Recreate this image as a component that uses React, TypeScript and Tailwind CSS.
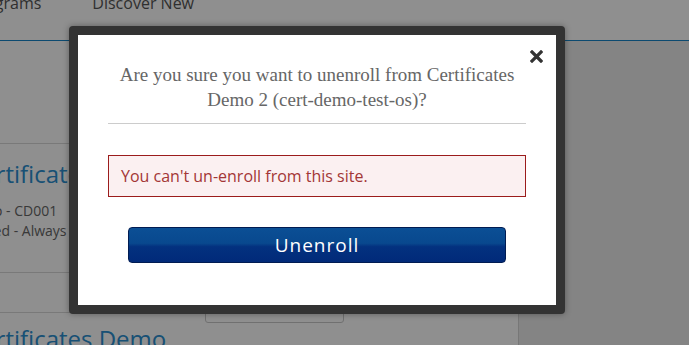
export default function App() {
  return (
    <div className="relative w-[689px] h-[345px] overflow-hidden bg-[#ececec] font-['Open_Sans',sans-serif]">
      {/* Page behind the dialog */}
      <header className="h-[50px] bg-white border-b border-[#1784c8] flex items-start gap-[51px] -ml-[31px] -mt-[9px] text-[16px] text-[#555]">
        <span>Programs</span>
        <span>Discover New</span>
      </header>

      <div className="flex">
        <div className="w-[519px] h-[304px] bg-white border-r border-[#d4d4d4] pt-[102px]">
          {/* Course item */}
          <div className="border-t border-[#d8d8d8] h-[129px] pt-[14px]">
            <h2 className="-ml-[33px] text-[24px] leading-[32px] text-[#2b8fd0] whitespace-nowrap">Certificates Demo 2</h2>
            <p className="-ml-[37px] mt-[11px] text-[14px] leading-[20px] text-[#666] whitespace-nowrap">Demo - CD001</p>
            <p className="-ml-[44px] text-[14px] leading-[20px] text-[#666] whitespace-nowrap">Enrolled - Always</p>
          </div>
          <div className="border-t border-[#d8d8d8] h-[40px]" />
          <div className="border-t border-[#d8d8d8] pt-[10px]">
            <h2 className="-ml-[33px] text-[24px] leading-[32px] text-[#2b8fd0] whitespace-nowrap">Certificates Demo</h2>
          </div>
        </div>
        <div className="flex-1" />
      </div>

      {/* Dropdown that sits below the modal */}
      <div className="absolute left-[205px] top-[250px] w-[139px] h-[73px] bg-white border border-[#c8c8c8] rounded-b-[3px]" />

      {/* Overlay */}
      <div className="absolute inset-0 bg-black/[0.44]" />

      {/* Modal */}
      <div className="absolute left-[69px] top-[26px] w-[496px] h-[288px] bg-[#333] rounded-[4px] p-[9px] shadow-[0_0_6px_rgba(0,0,0,0.35)]">
        <div className="relative h-full bg-white flex flex-col items-center px-[30px]">
          <button className="absolute top-[15px] right-[13px] w-[13px] h-[13px] flex items-center justify-center">
            <svg width="13" height="13" viewBox="0 0 13 13">
              <path d="M2 2 L11 11 M11 2 L2 11" stroke="#333" strokeWidth="3.2" strokeLinecap="square" />
            </svg>
          </button>

          <h3 className="mt-[27px] w-full text-center font-['Liberation_Serif',serif] text-[19px] leading-[25px] text-[#666]">
            Are you sure you want to unenroll from Certificates Demo 2 (cert-demo-test-os)?
          </h3>
          <hr className="mt-[11px] w-full border-t border-[#cccccc]" />

          <div className="mt-[31px] w-full h-[42px] border border-[#9b1c1c] bg-[#fbf0f1] pl-[12px] flex items-center text-[16px] text-[#a33636]">
            You can't un-enroll from this site.
          </div>

          <button className="mt-[30px] w-[378px] h-[36px] rounded-[4px] border border-[#011c52] bg-[linear-gradient(to_bottom,#0b4f95_0%,#08488e_45%,#03317f_55%,#012a79_100%)] text-white text-[19px] tracking-[1px] flex items-center justify-center">
            Unenroll
          </button>
        </div>
      </div>
    </div>
  )
}
